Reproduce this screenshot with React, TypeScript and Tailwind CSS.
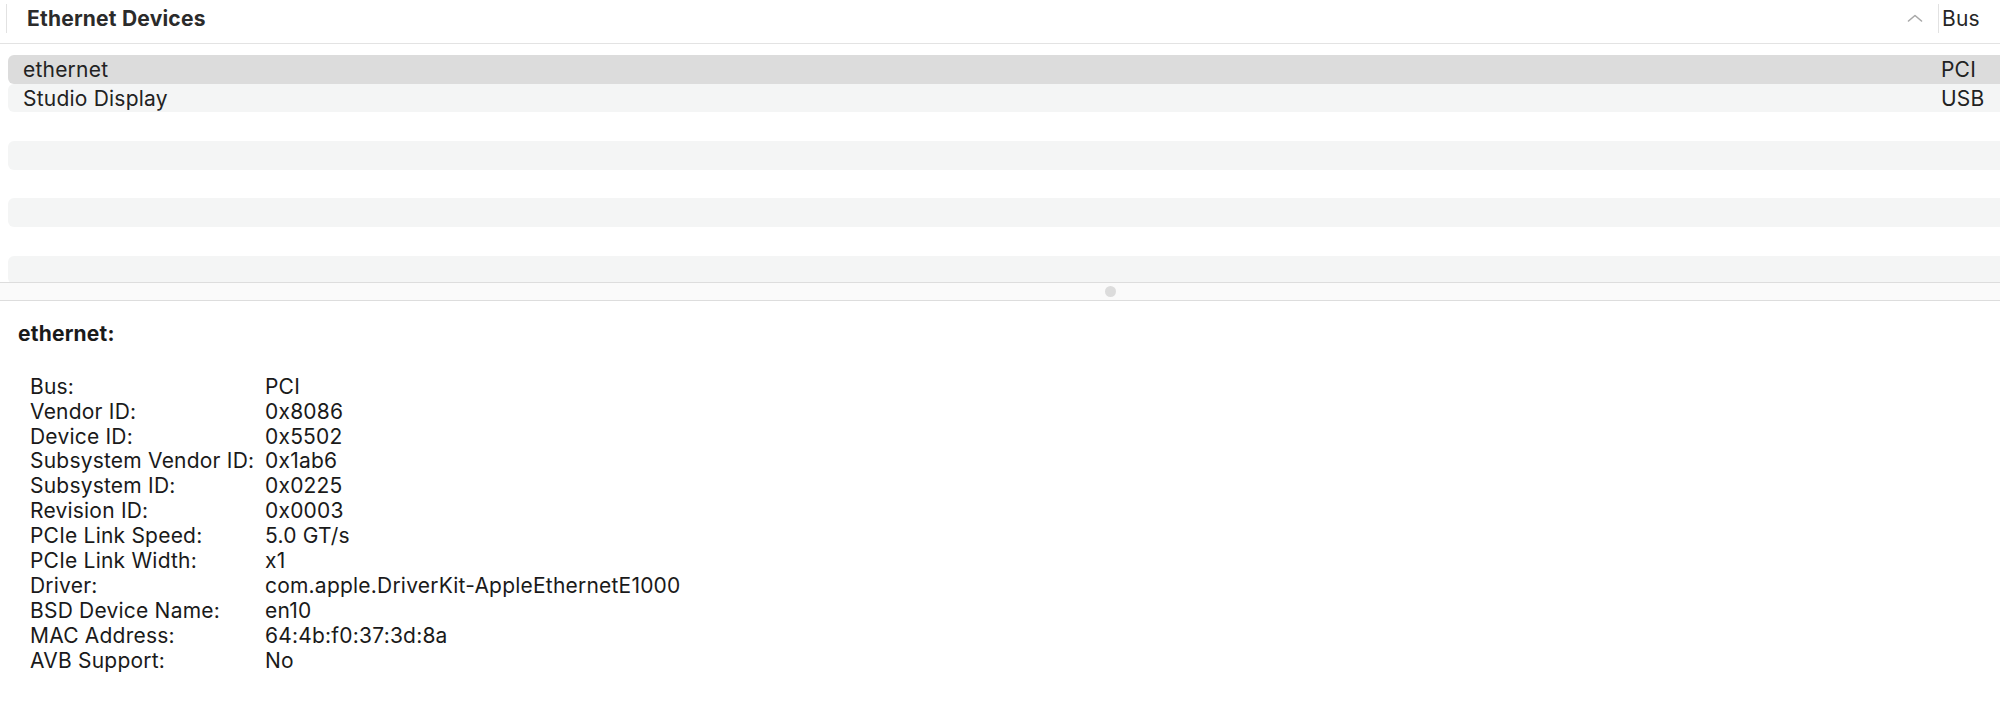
import React from 'react';

const devices = [
  { name: 'ethernet', bus: 'PCI' },
  { name: 'Studio Display', bus: 'USB' },
  { name: '', bus: '' },
  { name: '', bus: '' },
  { name: '', bus: '' },
  { name: '', bus: '' },
  { name: '', bus: '' },
  { name: '', bus: '' },
];

const details: [string, string][] = [
  ['Bus:', 'PCI'],
  ['Vendor ID:', '0x8086'],
  ['Device ID:', '0x5502'],
  ['Subsystem Vendor ID:', '0x1ab6'],
  ['Subsystem ID:', '0x0225'],
  ['Revision ID:', '0x0003'],
  ['PCIe Link Speed:', '5.0 GT/s'],
  ['PCIe Link Width:', 'x1'],
  ['Driver:', 'com.apple.DriverKit-AppleEthernetE1000'],
  ['BSD Device Name:', 'en10'],
  ['MAC Address:', '64:4b:f0:37:3d:8a'],
  ['AVB Support:', 'No'],
];

const SortChevron = () => (
  <svg width="16" height="8" viewBox="0 0 16 8" fill="none">
    <polyline points="1.5,7 8,1.5 14.5,7" stroke="#a8a8a8" strokeWidth="1.6" strokeLinecap="round" strokeLinejoin="round" />
  </svg>
);

const App = () => {
  const selected = 0;

  return (
    <div className="w-[2000px] h-[716px] bg-white overflow-hidden flex flex-col font-['Inter','Liberation_Sans',sans-serif] text-[21px] tracking-[0.01em] leading-[24.75px]">
      {/* column header */}
      <div className="h-[44px] shrink-0 flex border-b border-[#e3e3e3]">
        <div className="ml-[6px] mt-[4px] w-px h-[29px] bg-[#e2e2e2]" />
        <div className="flex-1 pl-[20px] pt-[7px] font-bold text-[#2b2b2b]">Ethernet Devices</div>
        <div className="pt-[14px] mr-[15px]">
          <SortChevron />
        </div>
        <div className="mt-[4px] w-px h-[29px] bg-[#e2e2e2]" />
        <div className="w-[61px] pl-[3px] pt-[7px] text-[#262626]">Bus</div>
      </div>

      {/* device list */}
      <div className="h-[238px] shrink-0 overflow-hidden pt-[11px] pl-[8px]">
        {devices.map((d, i) => (
          <div
            key={i}
            className={
              'h-[28.67px] pt-[2px] flex items-center rounded-l-[6px] text-[#222222] ' +
              (i === selected ? 'bg-[#dcdcdc]' : i % 2 === 1 ? 'bg-[#f4f5f5]' : 'bg-white')
            }
          >
            <div className="flex-1 pl-[15px]">{d.name}</div>
            <div className="w-[59px]">{d.bus}</div>
          </div>
        ))}
      </div>

      {/* split view divider */}
      <div className="h-[19px] shrink-0 flex items-center bg-[#fafafa] border-t border-b border-[#dddddd]">
        <div className="ml-[1105px] w-[11px] h-[11px] rounded-full bg-[#dcdcdc]" />
      </div>

      {/* detail pane */}
      <div className="flex-1 pt-[21px] pl-[18px] text-[#1a1a1a]">
        <div className="font-bold">ethernet:</div>
        <div className="mt-[28px] pl-[12px] grid grid-cols-[235px_auto] justify-start leading-[24.9px]">
          {details.map(([k, v]) => (
            <React.Fragment key={k}>
              <div>{k}</div>
              <div>{v}</div>
            </React.Fragment>
          ))}
        </div>
      </div>
    </div>
  );
};

export default App;
